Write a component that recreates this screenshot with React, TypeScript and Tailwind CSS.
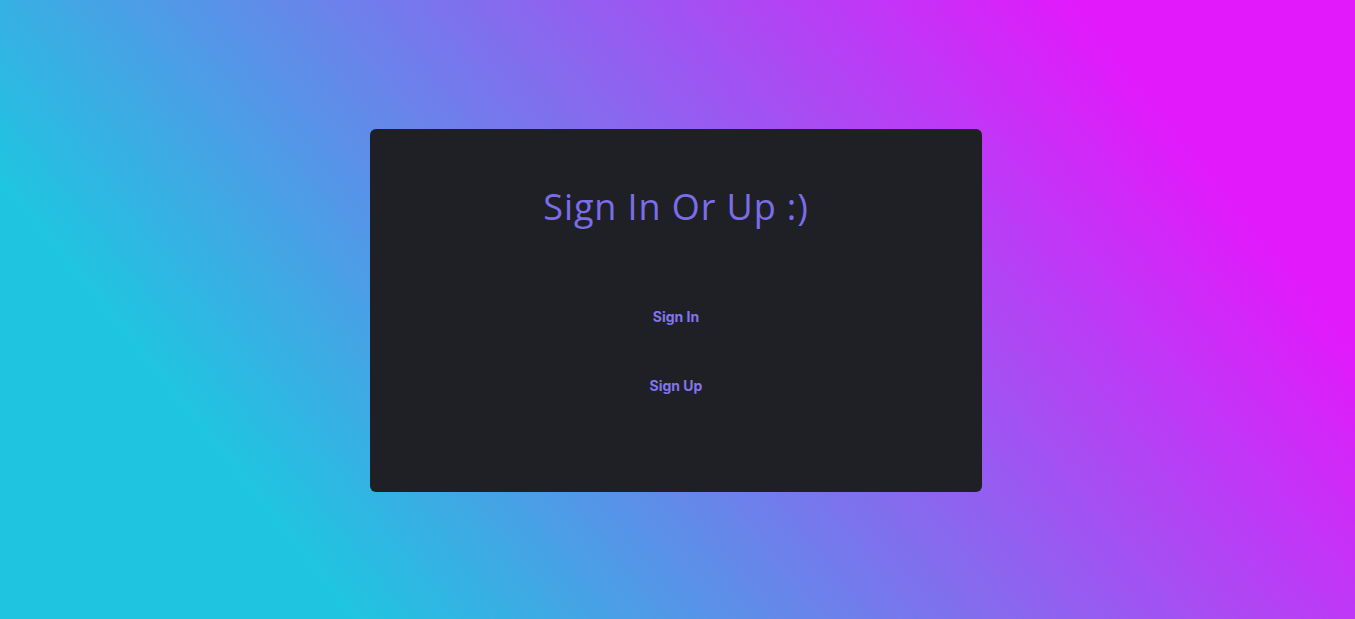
export default function App() {
  return (
    <div className="min-h-screen w-full pr-[3px] pt-[2px] flex items-center justify-center bg-[linear-gradient(51deg,#1fc5e0_19%,#e219fb_85%)]">
      <div className="w-[612px] h-[363px] bg-[#1f2025] rounded-md flex flex-col items-center">
        <h1 className="mt-[56px] text-[36px] leading-[44px] text-[#7b6de9] font-['Open_Sans',sans-serif] font-normal tracking-[0.9px]">
          Sign In Or Up :)
        </h1>
        <div className="mt-[78px] flex flex-col items-center gap-[49px]">
          <button className="text-[14px] leading-[20px] font-bold text-[#8174ee] font-['Inter',sans-serif]">
            Sign In
          </button>
          <button className="text-[14px] leading-[20px] font-bold text-[#8174ee] font-['Inter',sans-serif]">
            Sign Up
          </button>
        </div>
      </div>
    </div>
  );
}
